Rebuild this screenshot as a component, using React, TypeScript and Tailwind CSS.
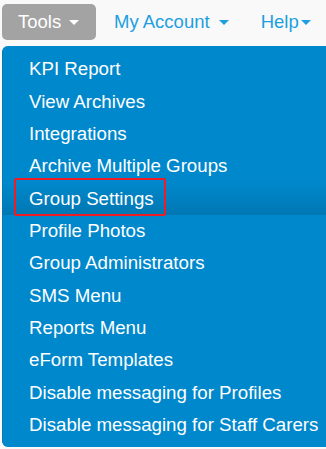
import React from "react";

const items = [
  "KPI Report",
  "View Archives",
  "Integrations",
  "Archive Multiple Groups",
  "Group Settings",
  "Profile Photos",
  "Group Administrators",
  "SMS Menu",
  "Reports Menu",
  "eForm Templates",
  "Disable messaging for Profiles",
  "Disable messaging for Staff Carers",
];

function Caret({ className }: { className?: string }) {
  return (
    <svg width="10" height="5" viewBox="0 0 10 5" className={className}>
      <path d="M0 0 L10 0 L5 5 Z" fill="currentColor" />
    </svg>
  );
}

export default function App() {
  return (
    <div
      className="w-[326px] h-[449px] bg-[#f9f9f9] overflow-hidden"
      style={{ fontFamily: '"Liberation Sans", Arial, sans-serif' }}
    >
      <div className="flex items-center h-[44px] pl-[2px]">
        <div className="flex items-center h-[36px] w-[94px] rounded-[5px] bg-[#a3a3a3] text-white text-[18.5px] pl-[16px] gap-[8px]">
          <span>Tools</span>
          <Caret className="text-white mt-[1px]" />
        </div>
        <div className="flex items-center ml-[18px] text-[#1d9fe0] text-[18.5px] gap-[9px]">
          <span>My Account</span>
          <Caret className="mt-[1px]" />
        </div>
        <div className="flex items-center ml-[32px] text-[#1d9fe0] text-[18.5px] gap-[2px]">
          <span>Help</span>
          <Caret className="mt-[1px]" />
        </div>
      </div>
      <div className="ml-[2px] mt-[2px] w-[340px] h-[401px] bg-[#0088cc] rounded-tl-[6px] rounded-bl-[6px] pt-[7px] border-l border-[#0679b3]">
        {items.map((item, i) => (
          <div
            key={item}
            className={
              "relative h-[32.36px] flex items-center pl-[26px] text-white text-[18.7px] " +
              (i === 4 ? "bg-gradient-to-b from-[#0088cc] to-[#0077b3]" : "")
            }
          >
            <span className="relative z-10">{item}</span>
            {i === 4 && (
              <div className="absolute left-[11px] top-[-4px] w-[152px] h-[38px] border-2 border-[#ee1c25] rounded-[2px]" />
            )}
          </div>
        ))}
      </div>
    </div>
  );
}
